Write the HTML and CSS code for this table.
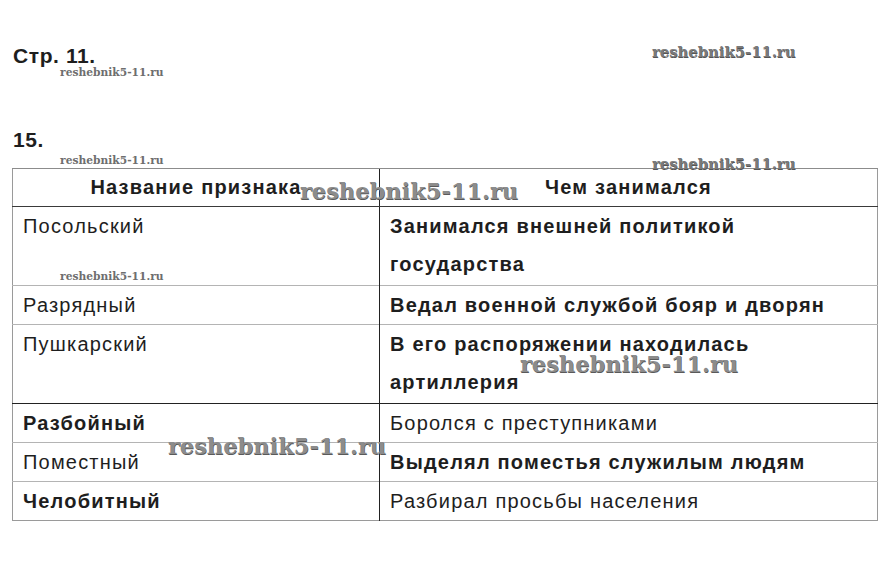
FILE: index.html
```html
<!DOCTYPE html>
<html lang="ru">
<head>
<meta charset="utf-8">
<title>Стр. 11</title>
<link rel="stylesheet" href="styles.css">
</head>
<body>
<div class="page">
  <div class="title">Стр. 11.</div>
  <div class="num">15.</div>
  <table class="grid">
    <colgroup><col class="c1"><col class="c2"></colgroup>
    <thead>
      <tr><th>Название признака</th><th class="dv">Чем занимался</th></tr>
    </thead>
    <tbody>
      <tr class="two"><td>Посольский</td><td class="dv b">Занимался внешней политикой государства</td></tr>
      <tr><td>Разрядный</td><td class="dv b">Ведал военной службой бояр и дворян</td></tr>
      <tr class="two"><td>Пушкарский</td><td class="dv b">В его распоряжении находилась артиллерия</td></tr>
      <tr class="dark"><td class="b">Разбойный</td><td class="dv">Боролся с преступниками</td></tr>
      <tr><td>Поместный</td><td class="dv b">Выделял поместья служилым людям</td></tr>
      <tr><td class="b">Челобитный</td><td class="dv">Разбирал просьбы населения</td></tr>
    </tbody>
  </table>

  <span class="wm s w1">reshebnik5-11.ru</span>
  <span class="wm m w2">reshebnik5-11.ru</span>
  <span class="wm s w3">reshebnik5-11.ru</span>
  <span class="wm m w4">reshebnik5-11.ru</span>
  <span class="wm l w5">reshebnik5-11.ru</span>
  <span class="wm s w6">reshebnik5-11.ru</span>
  <span class="wm l w7">reshebnik5-11.ru</span>
  <span class="wm l w8">reshebnik5-11.ru</span>
</div>
</body>
</html>
```

FILE: styles.css
```css
html, body {
  margin: 0;
  padding: 0;
  background: #fff;
}
.page {
  position: relative;
  width: 888px;
  height: 566px;
  padding: 45px 0 0 12px;
  box-sizing: border-box;
  font-family: "Liberation Sans", Arial, sans-serif;
  color: #1e1e1e;
}
.title, .num {
  font-size: 21px;
  font-weight: bold;
  line-height: 22px;
  letter-spacing: 0.6px;
  padding-left: 1px;
}
.num {
  margin-top: 62px;
}
.grid {
  margin-top: 17px;
  width: 866px;
  border-collapse: collapse;
  table-layout: fixed;
  font-size: 20px;
  letter-spacing: 1.2px;
  border: 1px solid #9a9a9a;
}
.c1 { width: 367px; }
.grid th, .grid td {
  border-top: 1px solid #b4b4b4;
  padding: 0 10px;
  line-height: 38px;
  vertical-align: top;
  text-align: left;
  font-weight: normal;
}
.grid tr.two td { padding-bottom: 2px; }
.grid td.dv { padding-right: 40px; }
.grid th {
  font-weight: bold;
  text-align: center;
  border-top: 1px solid #8c8c8c;
  border-bottom: 1px solid #3a3a3a;
  line-height: 37px;
}
.grid td.b { font-weight: bold; }
.grid .dv { border-left: 1px solid #222; }
.grid tr.dark td { border-top: 1px solid #222; }

.wm {
  position: absolute;
  font-family: "DejaVu Serif", "Liberation Serif", serif;
  font-weight: bold;
  white-space: nowrap;
  line-height: 1;
  color: #8c8c8c;
  text-shadow: 0.5px 0.5px 0 #5a5a5a;
}
.wm.s { font-size: 10.7px; color: #6e6e6e; text-shadow: none; }
.wm.m { font-size: 14.8px; color: #7a7a7a; text-shadow: 0.5px 0.5px 0 #555; }
.wm.l { font-size: 22.5px; }
.w1 { left: 60px; top: 68px; }
.w2 { left: 652px; top: 45px; }
.w3 { left: 60px; top: 156px; }
.w4 { left: 652px; top: 157px; }
.w5 { left: 300px; top: 180px; }
.w6 { left: 60px; top: 272px; }
.w7 { left: 520px; top: 353px; }
.w8 { left: 168px; top: 435px; }
```
